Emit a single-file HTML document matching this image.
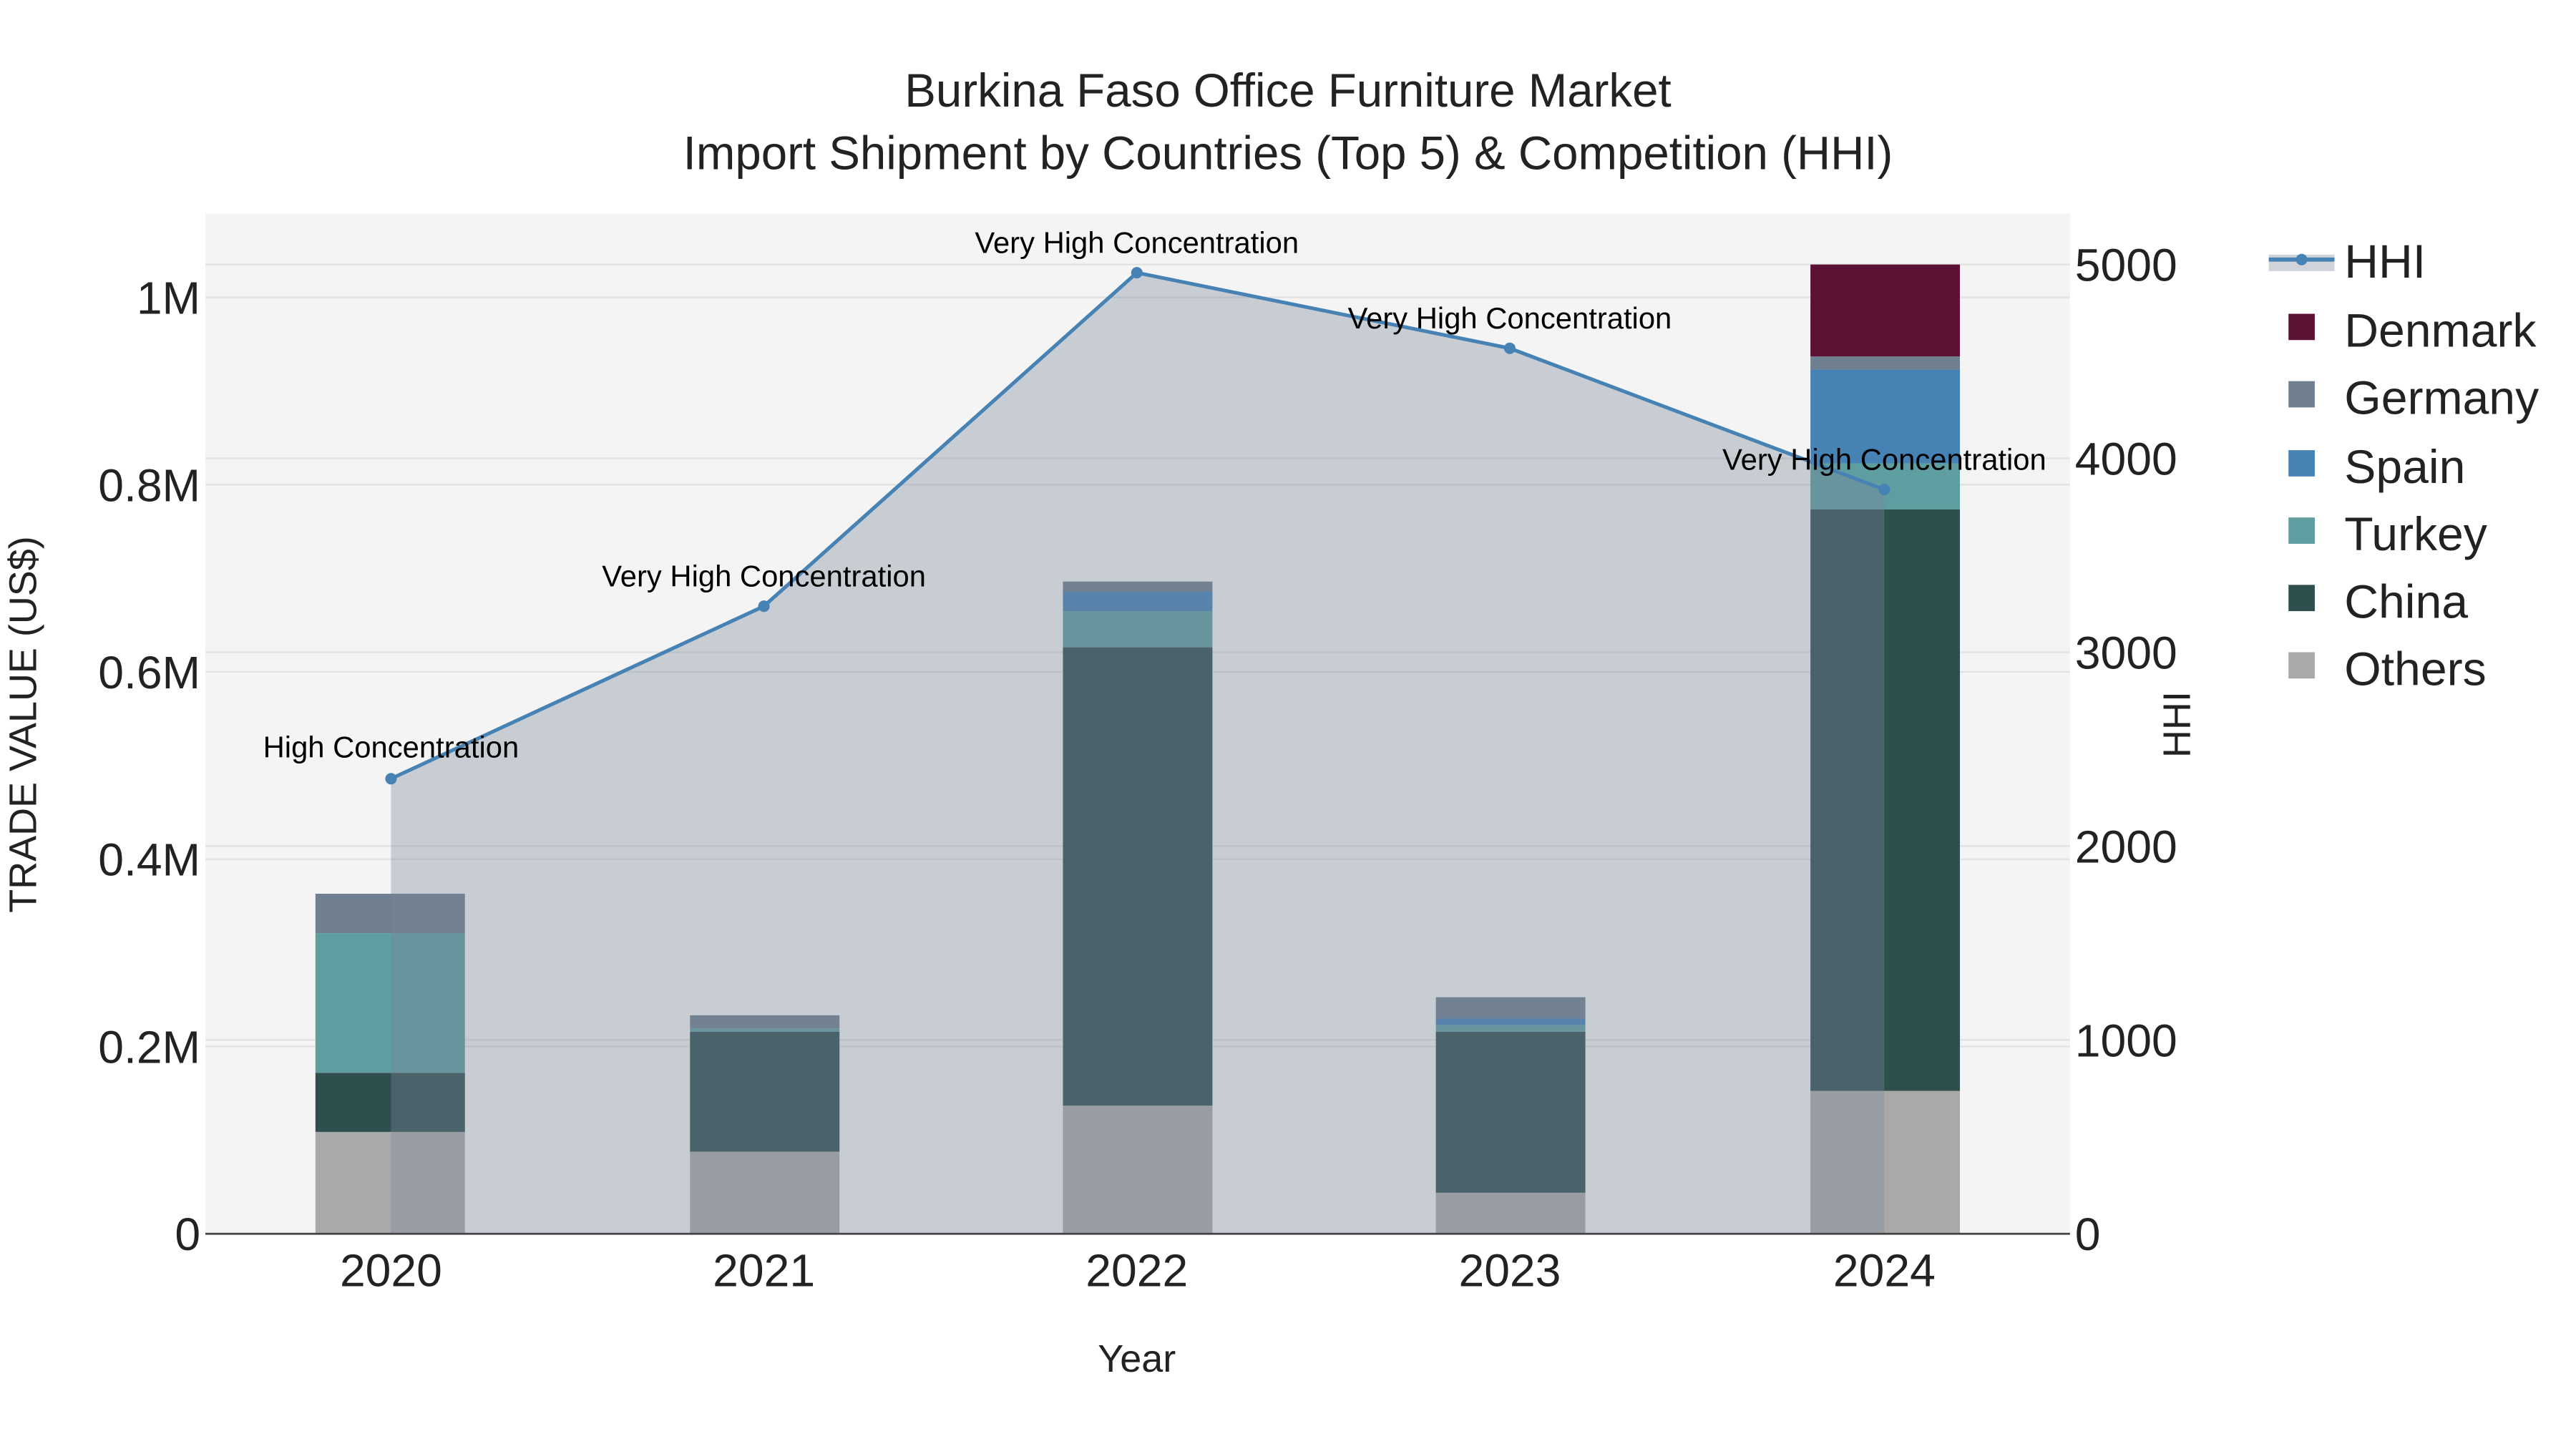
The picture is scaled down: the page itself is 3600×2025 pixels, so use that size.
<!DOCTYPE html>
<html><head><meta charset="utf-8"><style>html,body{margin:0;padding:0;background:#fff}svg{display:block}text{font-family:"Liberation Sans",sans-serif}</style></head>
<body>
<svg width="3600" height="2025" viewBox="0 0 1568 882" xmlns="http://www.w3.org/2000/svg">
<rect width="1568" height="882" fill="#fff"/>
<rect x="125" y="130" width="1135" height="621" fill="#f4f4f4"/>
<g stroke="#e2e2e2" stroke-width="1">
<line x1="125" x2="1260" y1="637" y2="637"/><line x1="125" x2="1260" y1="523" y2="523"/><line x1="125" x2="1260" y1="409" y2="409"/><line x1="125" x2="1260" y1="295" y2="295"/><line x1="125" x2="1260" y1="181" y2="181"/>
<line x1="125" x2="1260" y1="633" y2="633"/><line x1="125" x2="1260" y1="515" y2="515"/><line x1="125" x2="1260" y1="397" y2="397"/><line x1="125" x2="1260" y1="279" y2="279"/><line x1="125" x2="1260" y1="161" y2="161"/>
</g>
<g>
<rect x="192" y="689" width="91" height="62" fill="#a9a9a9"/>
<rect x="192" y="653" width="91" height="36" fill="#2f4f4f"/>
<rect x="192" y="568" width="91" height="85" fill="#5f9ea0"/>
<rect x="192" y="544" width="91" height="24" fill="#708090"/>

<rect x="420" y="701" width="91" height="50" fill="#a9a9a9"/>
<rect x="420" y="628" width="91" height="73" fill="#2f4f4f"/>
<rect x="420" y="626" width="91" height="2" fill="#5f9ea0"/>
<rect x="420" y="618" width="91" height="8" fill="#708090"/>

<rect x="647" y="673" width="91" height="78" fill="#a9a9a9"/>
<rect x="647" y="394" width="91" height="279" fill="#2f4f4f"/>
<rect x="647" y="372" width="91" height="22" fill="#5f9ea0"/>
<rect x="647" y="360" width="91" height="12" fill="#4682b4"/>
<rect x="647" y="354" width="91" height="6" fill="#708090"/>

<rect x="874" y="726" width="91" height="25" fill="#a9a9a9"/>
<rect x="874" y="628" width="91" height="98" fill="#2f4f4f"/>
<rect x="874" y="624" width="91" height="4" fill="#5f9ea0"/>
<rect x="874" y="620" width="91" height="4" fill="#4682b4"/>
<rect x="874" y="607" width="91" height="13" fill="#708090"/>

<rect x="1102" y="664" width="91" height="87" fill="#a9a9a9"/>
<rect x="1102" y="310" width="91" height="354" fill="#2f4f4f"/>
<rect x="1102" y="282" width="91" height="28" fill="#5f9ea0"/>
<rect x="1102" y="225" width="91" height="57" fill="#4682b4"/>
<rect x="1102" y="217" width="91" height="8" fill="#708090"/>
<rect x="1102" y="161" width="91" height="56" fill="#5c1234"/>
</g>
<polygon points="238,751 238,474 465,369 692,166 919,212 1147,298 1147,751" fill="rgba(122,133,152,0.36)"/>
<polyline points="238,474 465,369 692,166 919,212 1147,298" fill="none" stroke="#4682b4" stroke-width="2.2"/>
<g fill="#4682b4"><circle cx="238" cy="474" r="3.5"/><circle cx="465" cy="369" r="3.5"/><circle cx="692" cy="166" r="3.5"/><circle cx="919" cy="212" r="3.5"/><circle cx="1147" cy="298" r="3.5"/></g>
<line x1="125" x2="1260" y1="751" y2="751" stroke="#444" stroke-width="1.2"/>
<g font-size="18.2" text-anchor="middle" fill="#000">
<text x="238" y="461">High Concentration</text>
<text x="465" y="357">Very High Concentration</text>
<text x="692" y="154">Very High Concentration</text>
<text x="919" y="200">Very High Concentration</text>
<text x="1147" y="286">Very High Concentration</text>
</g>
<g font-size="28.5" text-anchor="middle" fill="#222">
<text x="784" y="65">Burkina Faso Office Furniture Market</text>
<text x="784" y="103">Import Shipment by Countries (Top 5) &amp; Competition (HHI)</text>
</g>
<g font-size="28" text-anchor="end" fill="#222">
<text x="122" y="761">0</text><text x="122" y="647">0.2M</text><text x="122" y="533">0.4M</text><text x="122" y="419">0.6M</text><text x="122" y="305">0.8M</text><text x="122" y="191">1M</text>
</g>
<g font-size="28" text-anchor="start" fill="#222">
<text x="1263" y="761">0</text><text x="1263" y="643">1000</text><text x="1263" y="525">2000</text><text x="1263" y="407">3000</text><text x="1263" y="289">4000</text><text x="1263" y="171">5000</text>
</g>
<g font-size="28" text-anchor="middle" fill="#222">
<text x="238" y="783">2020</text><text x="465" y="783">2021</text><text x="692" y="783">2022</text><text x="919" y="783">2023</text><text x="1147" y="783">2024</text>
</g>
<text x="692" y="835" font-size="23.5" text-anchor="middle" fill="#222">Year</text>
<text transform="translate(22,441) rotate(-90)" font-size="23.5" text-anchor="middle" fill="#222">TRADE VALUE (US$)</text>
<text transform="translate(1333,441) rotate(-90)" font-size="23.5" text-anchor="middle" fill="#222">HHI</text>
<rect x="1381" y="155" width="40" height="10" fill="rgba(122,133,152,0.36)"/>
<line x1="1381" x2="1421" y1="158" y2="158" stroke="#4682b4" stroke-width="2.5"/>
<circle cx="1401" cy="158" r="3.5" fill="#4682b4"/>
<g font-size="28.8" fill="#222">
<text x="1427" y="169">HHI</text>
<text x="1427" y="211">Denmark</text>
<text x="1427" y="252">Germany</text>
<text x="1427" y="294">Spain</text>
<text x="1427" y="335">Turkey</text>
<text x="1427" y="376">China</text>
<text x="1427" y="417">Others</text>
</g>
<rect x="1393" y="191" width="16" height="16" fill="#5c1234"/>
<rect x="1393" y="232" width="16" height="16" fill="#708090"/>
<rect x="1393" y="274" width="16" height="16" fill="#4682b4"/>
<rect x="1393" y="315" width="16" height="16" fill="#5f9ea0"/>
<rect x="1393" y="356" width="16" height="16" fill="#2f4f4f"/>
<rect x="1393" y="397" width="16" height="16" fill="#a9a9a9"/>
</svg>
</body></html>
